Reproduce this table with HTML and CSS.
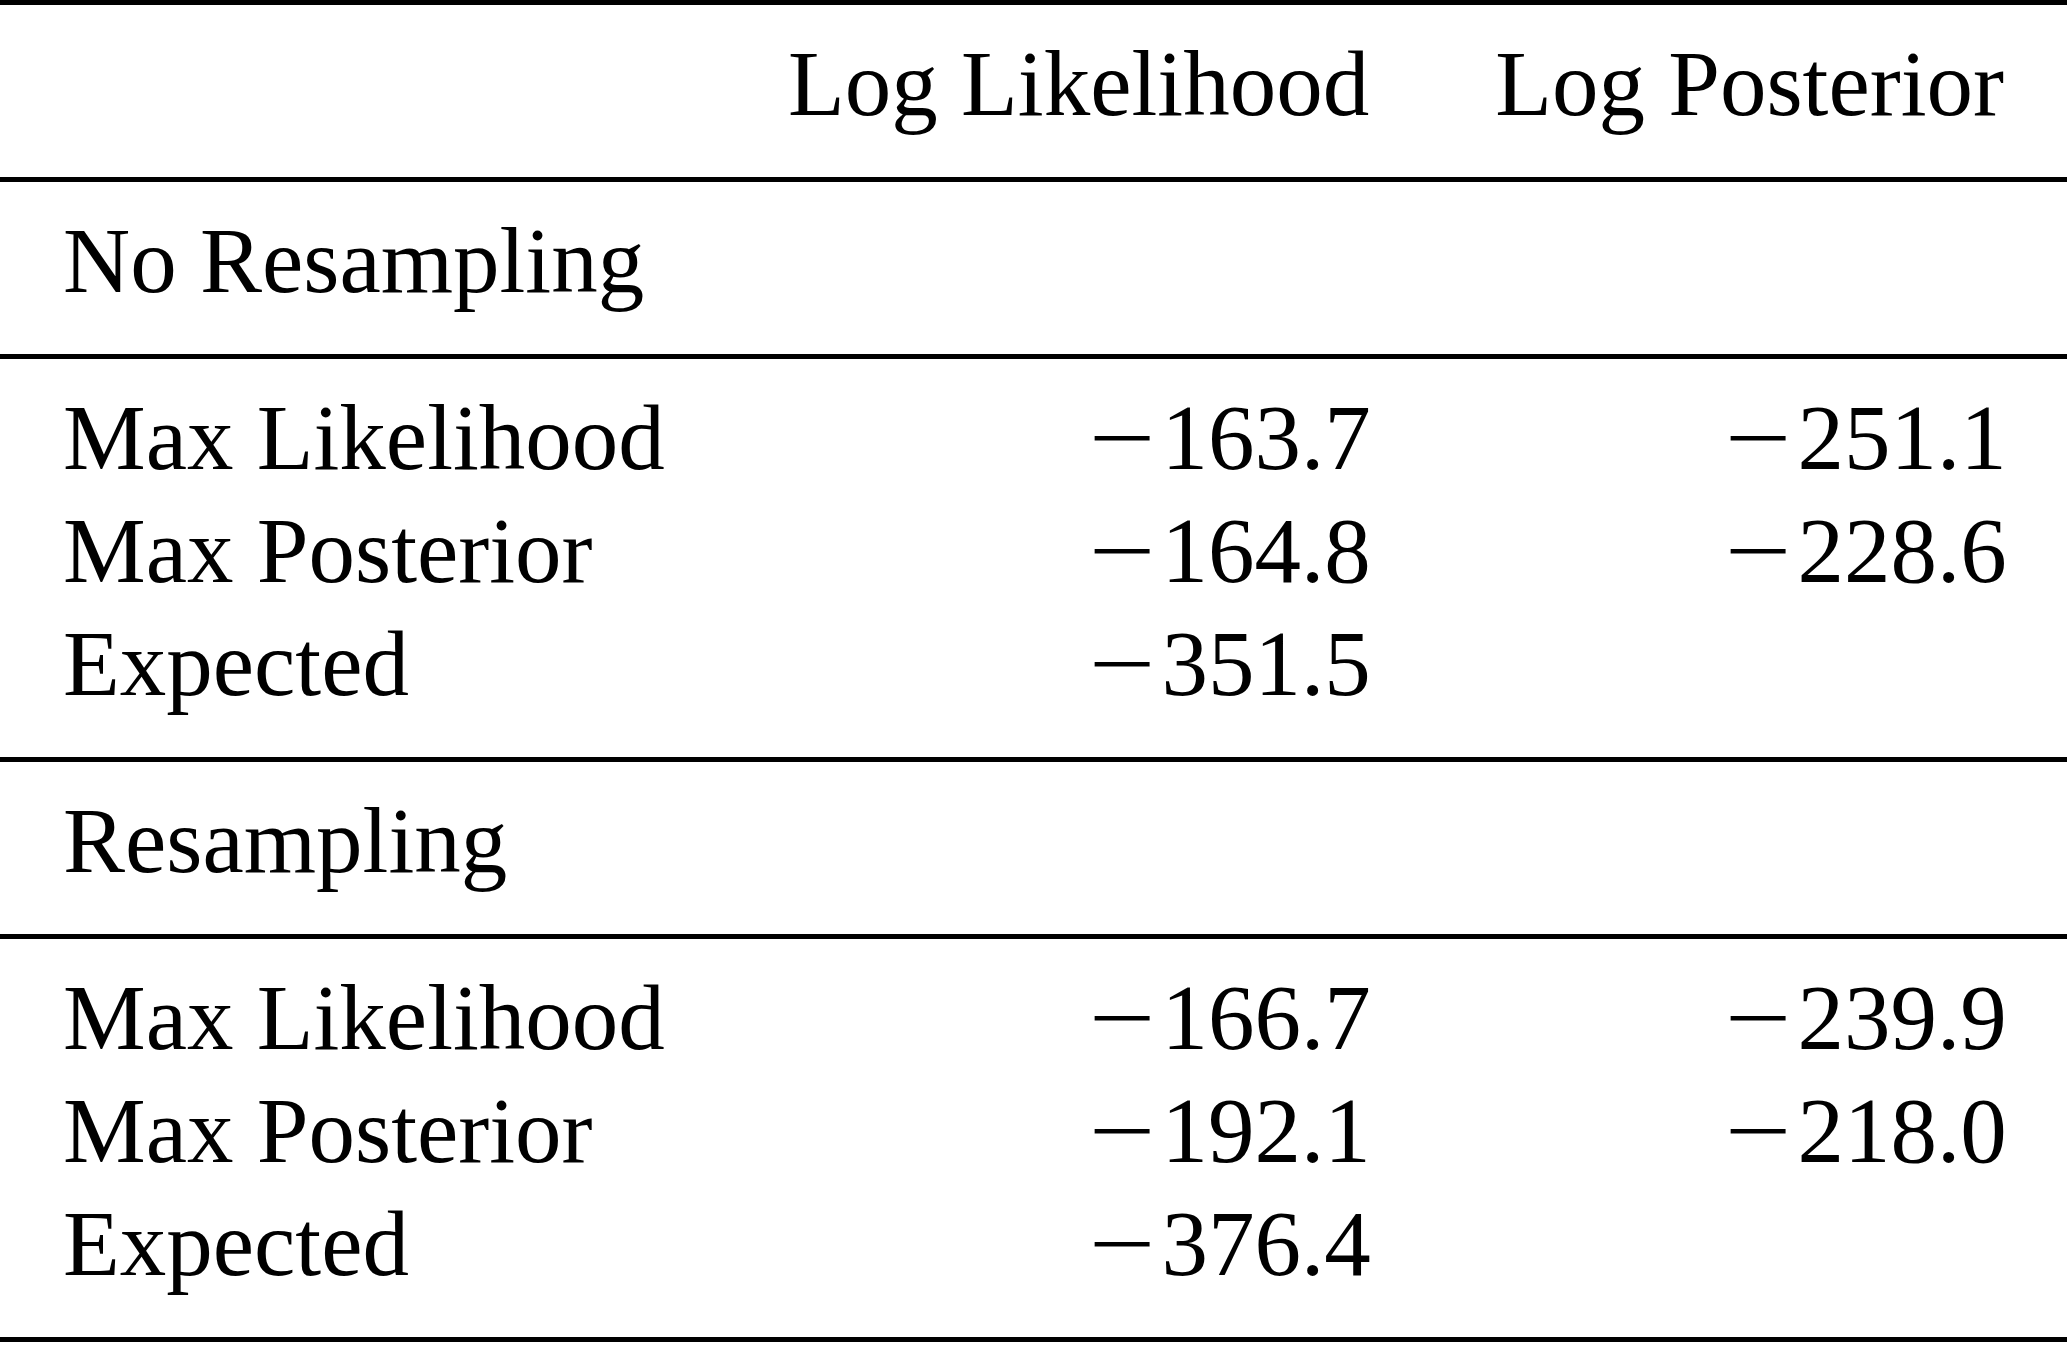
FILE: index.html
```html
<!DOCTYPE html>
<html lang="en">
<head>
<meta charset="utf-8">
<title>Log Likelihood and Log Posterior</title>
<link rel="stylesheet" href="styles.css">
</head>
<body>
<div class="table">
  <div class="group">
    <div class="cell"></div>
    <div class="cell num">Log Likelihood</div>
    <div class="cell num">Log Posterior</div>
  </div>
  <div class="group">
    <div class="cell label">No Resampling</div>
  </div>
  <div class="group">
    <div class="cell">Max Likelihood</div>
    <div class="cell num"><span class="neg">−</span>163.7</div>
    <div class="cell num"><span class="neg">−</span>251.1</div>
    <div class="cell">Max Posterior</div>
    <div class="cell num"><span class="neg">−</span>164.8</div>
    <div class="cell num"><span class="neg">−</span>228.6</div>
    <div class="cell">Expected</div>
    <div class="cell num"><span class="neg">−</span>351.5</div>
    <div class="cell num"></div>
  </div>
  <div class="group">
    <div class="cell label">Resampling</div>
  </div>
  <div class="group">
    <div class="cell">Max Likelihood</div>
    <div class="cell num"><span class="neg">−</span>166.7</div>
    <div class="cell num"><span class="neg">−</span>239.9</div>
    <div class="cell">Max Posterior</div>
    <div class="cell num"><span class="neg">−</span>192.1</div>
    <div class="cell num"><span class="neg">−</span>218.0</div>
    <div class="cell">Expected</div>
    <div class="cell num"><span class="neg">−</span>376.4</div>
    <div class="cell num"></div>
  </div>
</div>
</body>
</html>
```
FILE: styles.css
```css
html, body {
  margin: 0;
  padding: 0;
  background: #ffffff;
}

body {
  font-family: "Liberation Serif", "Times New Roman", serif;
  font-size: 93px;
  line-height: 113px;
  color: #000000;
}

.table {
  width: 2067px;
  border-top: 5px solid #000000;
  border-bottom: 5px solid #000000;
}

.group {
  display: grid;
  grid-template-columns: 1fr 580px 510px;
  column-gap: 126px;
  padding: 22px 63px 37px 63px;
  border-bottom: 5px solid #000000;
}

.group:last-child {
  border-bottom: none;
}

.cell {
  white-space: nowrap;
  height: 113px;
}

.label {
  grid-column: 1 / -1;
}

.num {
  text-align: right;
}

.neg {
  display: inline-block;
  margin-right: 6px;
  transform: scaleX(1.27);
  transform-origin: right center;
}
```
